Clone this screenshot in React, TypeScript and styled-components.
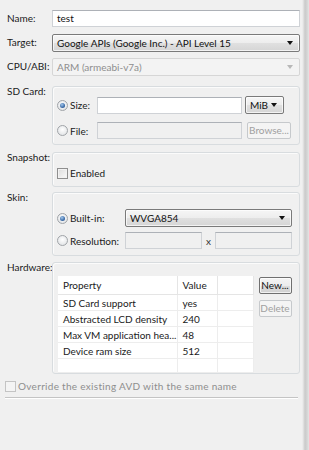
import React from 'react';
import styled, { createGlobalStyle, css } from 'styled-components';

const Global = createGlobalStyle`
  html, body { margin: 0; padding: 0; }
  body {
    background: #f0f0f0;
    font-family: Lato, "Open Sans", "Liberation Sans", sans-serif;
    font-size: 10px;
    color: #1a1a1a;
    width: 309px;
    height: 450px;
    overflow: hidden;
  }
`;

const Page = styled.div`
  width: 309px;
  height: 450px;
  box-sizing: border-box;
  padding: 10px 0 0 5px;
  background: linear-gradient(
    to right,
    #f0f0f0 0,
    #f0f0f0 302px,
    #e6e6e6 303px,
    #cacaca 305px,
    #d4d4d4 307px,
    #e4e4e4 309px
  );
  display: flex;
  flex-direction: column;
`;

const Row = styled.div<{ $mt?: number }>`
  display: grid;
  grid-template-columns: 47px 248px;
  margin-top: ${(p) => p.$mt ?? 0}px;
`;

const Label = styled.div<{ $group?: boolean }>`
  padding-left: 2px;
  line-height: ${(p) => (p.$group ? '12px' : '17px')};
  margin-top: ${(p) => (p.$group ? '-1px' : '0')};
  white-space: nowrap;
`;

const TextBox = styled.div<{ $w?: number; $disabled?: boolean }>`
  box-sizing: border-box;
  height: 17px;
  width: ${(p) => (p.$w ? `${p.$w}px` : '100%')};
  background: ${(p) => (p.$disabled ? '#f0f0f0' : '#ffffff')};
  border: 1px solid #cfd2d6;
  border-top-color: #adb1b7;
  padding: 0 4px;
  line-height: 15px;
  color: #111;
`;

const Combo = styled.div<{ $w?: number; $disabled?: boolean }>`
  box-sizing: border-box;
  height: 18px;
  width: ${(p) => (p.$w ? `${p.$w}px` : '100%')};
  border: 1px solid #7a7a7a;
  border-radius: 2px;
  background: linear-gradient(#f6f6f6 0%, #ededed 50%, #e0e0e0 51%, #d5d5d5 100%);
  box-shadow: inset 0 0 0 1px rgba(255, 255, 255, 0.7);
  display: flex;
  align-items: center;
  justify-content: space-between;
  padding: 0 6px 0 4px;
  line-height: 16px;
  color: #111;
  white-space: nowrap;
  ${(p) =>
    p.$disabled &&
    css`
      border-color: #d6d6d6;
      background: #f3f3f3;
      box-shadow: none;
      color: #8e8e8e;
    `}
`;

const Arrow = styled.span<{ $disabled?: boolean }>`
  width: 0;
  height: 0;
  border-left: 3.5px solid transparent;
  border-right: 3.5px solid transparent;
  border-top: 4px solid ${(p) => (p.$disabled ? '#b8b8b8' : '#111')};
  flex: none;
`;

const Button = styled.div<{ $disabled?: boolean }>`
  box-sizing: border-box;
  height: 17px;
  border: 1px solid #707070;
  border-radius: 2px;
  background: linear-gradient(#f4f4f4 0%, #ececec 50%, #dddddd 51%, #d0d0d0 100%);
  box-shadow: inset 0 0 0 1px rgba(255, 255, 255, 0.7);
  display: flex;
  align-items: center;
  justify-content: center;
  line-height: 15px;
  color: #111;
  white-space: nowrap;
  ${(p) =>
    p.$disabled &&
    css`
      border-color: #c6c9cc;
      background: #f4f4f4;
      box-shadow: none;
      color: #a0a0a0;
    `}
`;

const Group = styled.div<{ $h: number; $pt: number }>`
  box-sizing: border-box;
  height: ${(p) => p.$h}px;
  border: 1px solid #d8dcdf;
  border-radius: 3px;
  box-shadow: inset 1px 1px 0 #fbfbfb;
  padding: ${(p) => p.$pt}px 0 0 4px;
  display: flex;
  flex-direction: column;
`;

const OptionRow = styled.div<{ $cols: string; $mt?: number }>`
  display: grid;
  grid-template-columns: ${(p) => p.$cols};
  align-items: center;
  margin-top: ${(p) => p.$mt ?? 0}px;
`;

const RadioLabel = styled.div`
  display: flex;
  align-items: center;
  gap: 2px;
  white-space: nowrap;
`;

const RadioDot = styled.span<{ $on?: boolean }>`
  box-sizing: border-box;
  width: 11px;
  height: 11px;
  border-radius: 50%;
  border: 1px solid #a0a4a8;
  background: radial-gradient(circle at 50% 40%, #ffffff 0%, #e6e8ea 70%, #d4d6d8 100%);
  display: flex;
  align-items: center;
  justify-content: center;
  flex: none;
  &::after {
    content: '';
    display: ${(p) => (p.$on ? 'block' : 'none')};
    width: 5px;
    height: 5px;
    border-radius: 50%;
    background: radial-gradient(circle at 40% 35%, #a4c8ec 0%, #3d6da9 60%, #1f4175 100%);
  }
`;

const CheckBox = styled.span<{ $disabled?: boolean }>`
  box-sizing: border-box;
  width: 11px;
  height: 11px;
  border: 1px solid ${(p) => (p.$disabled ? '#c4c4c4' : '#8f8f8f')};
  background: ${(p) =>
    p.$disabled ? '#f4f4f4' : 'linear-gradient(135deg, #dcdcdc, #fafafa)'};
  box-shadow: inset 0 0 0 1px ${(p) => (p.$disabled ? '#f4f4f4' : '#f2f2f2')};
  flex: none;
`;

const CheckLabel = styled.div<{ $disabled?: boolean; $spacing?: number }>`
  display: flex;
  align-items: center;
  gap: 2px;
  line-height: 12px;
  letter-spacing: ${(p) => p.$spacing ?? 0}px;
  color: ${(p) => (p.$disabled ? '#8e8e8e' : '#1a1a1a')};
  white-space: nowrap;
`;

const Times = styled.div`
  text-align: center;
  color: #333;
`;

const HwBody = styled.div`
  display: flex;
  gap: 5px;
  padding-left: 1px;
`;

const Table = styled.table`
  width: 195px;
  border-collapse: collapse;
  table-layout: fixed;
  background: #fff;
  flex: none;
`;

const HeadCell = styled.th`
  height: 18px;
  padding: 0 0 0 5px;
  text-align: left;
  font-weight: normal;
  border-right: 1px solid #e5e5e5;
  border-bottom: 1px solid #e5e5e5;
  white-space: nowrap;
  overflow: hidden;
  line-height: 17px;
`;

const Cell = styled.td<{ $h?: number }>`
  height: ${(p) => p.$h ?? 15}px;
  padding: 0 0 0 5px;
  border-right: 1px solid #ededed;
  border-bottom: 1px solid #ededed;
  white-space: nowrap;
  overflow: hidden;
  line-height: 14px;
`;

const SideButtons = styled.div`
  display: flex;
  flex-direction: column;
  gap: 6px;
  width: 33px;
  padding-top: 1px;
`;

const Override = styled.div`
  margin-top: 6px;
`;

const Separator = styled.div`
  margin-top: 5px;
  width: 293px;
  height: 0;
  border-top: 1px solid #c4c4c4;
  border-bottom: 1px solid #ffffff;
`;

const rows = [
  ['SD Card support', 'yes'],
  ['Abstracted LCD density', '240'],
  ['Max VM application hea...', '48'],
  ['Device ram size', '512'],
];

export default function App() {
  return (
    <>
      <Global />
      <Page>
        <Row>
          <Label>Name:</Label>
          <TextBox>test</TextBox>
        </Row>
        <Row $mt={7}>
          <Label>Target:</Label>
          <Combo>
            <span>Google APIs (Google Inc.) - API Level 15</span>
            <Arrow />
          </Combo>
        </Row>
        <Row $mt={6}>
          <Label>CPU/ABI:</Label>
          <Combo $disabled>
            <span>ARM (armeabi-v7a)</span>
            <Arrow $disabled />
          </Combo>
        </Row>

        <Row $mt={10}>
          <Label $group>SD Card:</Label>
          <Group $h={59} $pt={9}>
            <OptionRow $cols="40px 145px 3px 39px">
              <RadioLabel>
                <RadioDot $on />
                Size:
              </RadioLabel>
              <TextBox />
              <span />
              <Combo>
                <span>MiB</span>
                <Arrow />
              </Combo>
            </OptionRow>
            <OptionRow $cols="40px 145px 5px 44px" $mt={8}>
              <RadioLabel>
                <RadioDot />
                File:
              </RadioLabel>
              <TextBox $disabled />
              <span />
              <Button $disabled>Browse...</Button>
            </OptionRow>
          </Group>
        </Row>

        <Row $mt={7}>
          <Label $group>Snapshot:</Label>
          <Group $h={35} $pt={14}>
            <CheckLabel>
              <CheckBox />
              Enabled
            </CheckLabel>
          </Group>
        </Row>

        <Row $mt={5}>
          <Label $group>Skin:</Label>
          <Group $h={64} $pt={16}>
            <OptionRow $cols="68px 167px">
              <RadioLabel>
                <RadioDot $on />
                Built-in:
              </RadioLabel>
              <Combo>
                <span>WVGA854</span>
                <Arrow />
              </Combo>
            </OptionRow>
            <OptionRow $cols="68px 77px 13px 77px" $mt={5}>
              <RadioLabel>
                <RadioDot />
                Resolution:
              </RadioLabel>
              <TextBox $disabled />
              <Times>x</Times>
              <TextBox $disabled />
            </OptionRow>
          </Group>
        </Row>

        <Row $mt={6}>
          <Label $group>Hardware:</Label>
          <Group $h={112} $pt={13}>
            <HwBody>
              <Table>
                <colgroup>
                  <col style={{ width: 119 }} />
                  <col style={{ width: 40 }} />
                  <col style={{ width: 36 }} />
                </colgroup>
                <thead>
                  <tr>
                    <HeadCell>Property</HeadCell>
                    <HeadCell>Value</HeadCell>
                    <HeadCell />
                  </tr>
                </thead>
                <tbody>
                  {rows.map(([k, v]) => (
                    <tr key={k}>
                      <Cell>{k}</Cell>
                      <Cell>{v}</Cell>
                      <Cell />
                    </tr>
                  ))}
                  <tr>
                    <Cell $h={13} />
                    <Cell $h={13} />
                    <Cell $h={13} />
                  </tr>
                </tbody>
              </Table>
              <SideButtons>
                <Button>New...</Button>
                <Button $disabled>Delete</Button>
              </SideButtons>
            </HwBody>
          </Group>
        </Row>

        <Override>
          <CheckLabel $disabled $spacing={0.3}>
            <CheckBox $disabled />
            Override the existing AVD with the same name
          </CheckLabel>
        </Override>
        <Separator />
      </Page>
    </>
  );
}
